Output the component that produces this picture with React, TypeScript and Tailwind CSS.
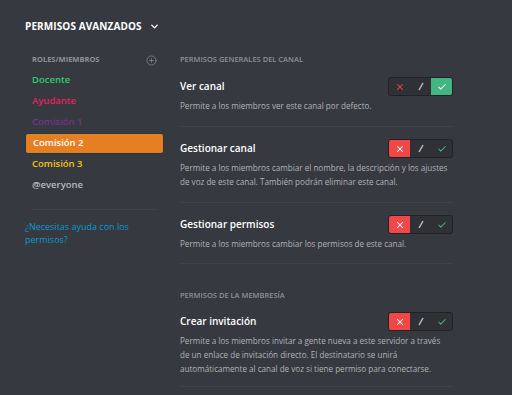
import React from "react";
import { ChevronDown, CirclePlus, X, Check } from "lucide-react";

const font = { fontFamily: '"Open Sans", "Noto Sans", sans-serif' };

type Role = { name: string; color: string; selected?: boolean };

const roles: Role[] = [
	{ name: "Docente", color: "text-[#2ecc71]" },
	{ name: "Ayudante", color: "text-[#e91e63]" },
	{ name: "Comisión 1", color: "text-[#71368a]" },
	{ name: "Comisión 2", color: "text-white", selected: true },
	{ name: "Comisión 3", color: "text-[#f1c40f]" },
	{ name: "@everyone", color: "text-[#b9bbbe]" },
];

const Toggle = ({ state }: { state: "allow" | "deny" }) => (
	<div className="flex w-[65px] h-[19px] rounded-[3px] border border-[#202225] bg-[#2f3136] overflow-hidden">
		<div
			className={`flex-1 flex items-center justify-center ${
				state === "deny" ? "bg-[#f04747]" : ""
			}`}
		>
			<X
				size={10}
				strokeWidth={2.5}
				className={state === "deny" ? "text-white" : "text-[#f04747]"}
			/>
		</div>
		<div className="flex-1 flex items-center justify-center">
			<svg width="8" height="9" viewBox="0 0 8 9">
				<path d="M2 8 L6 1" stroke="#b9bbbe" strokeWidth="1.5" />
			</svg>
		</div>
		<div
			className={`flex-1 flex items-center justify-center ${
				state === "allow" ? "bg-[#43b581]" : ""
			}`}
		>
			<Check
				size={10}
				strokeWidth={2.5}
				className={state === "allow" ? "text-white" : "text-[#43b581]"}
			/>
		</div>
	</div>
);

const Permission = ({
	title,
	desc,
	state,
	pt,
	pb,
}: {
	title: string;
	desc: string;
	state: "allow" | "deny";
	pt: string;
	pb: string;
}) => (
	<div className={`${pt} ${pb} border-b border-[#40434a]`}>
		<div className="flex h-[19px] items-center justify-between">
			<div className="text-[10px] font-semibold text-white">{title}</div>
			<Toggle state={state} />
		</div>
		<div className="mt-[3px] text-[8.1px] leading-[14px] text-[#b0b3b7] pr-[2px]">{desc}</div>
	</div>
);

const App = () => {
	return (
		<div className="w-[512px] h-[395px] bg-[#36393f] overflow-hidden flex flex-col select-none" style={font}>
			<div className="flex items-center h-[21px] mt-[16px] pl-[25px] w-[164px] justify-between pr-[4px]">
				<div className="text-[10px] font-bold text-white tracking-[0.1px]">PERMISOS AVANZADOS</div>
				<ChevronDown size={11} strokeWidth={3} className="text-white" />
			</div>
			<div className="flex flex-row mt-[16px]">
				<div className="w-[180px] pl-[25px]">
					<div className="w-[139px]">
						<div className="flex h-[14px] items-center justify-between px-[7px]">
							<div className="text-[7.5px] font-bold text-[#8e9297]">ROLES/MIEMBROS</div>
							<CirclePlus size={11} strokeWidth={1.5} className="text-[#8e9297]" />
						</div>
						<div className="mt-[3px] flex flex-col">
							{roles.map((r) => (
								<div
									key={r.name}
									className={`flex h-[21px] items-center px-[7px] rounded-[3px] text-[9.5px] font-semibold ${r.color} ${
										r.selected ? "bg-[#e67e22] border border-[#1e3a40] px-[6px]" : ""
									}`}
								>
									{r.name}
								</div>
							))}
						</div>
						<div className="mt-[13px] mx-[7px] h-px bg-[#40434a]" />
						<div className="mt-[10px] text-[9px] leading-[13px] text-[#0b98d0] w-[110px]">
							¿Necesitas ayuda con los permisos?
						</div>
					</div>
				</div>
				<div className="w-[273px]">
					<div className="h-[14px] flex items-center text-[7.5px] font-semibold text-[#8e9297]">
						PERMISOS GENERALES DEL CANAL
					</div>
					<Permission
						title="Ver canal"
						desc="Permite a los miembros ver este canal por defecto."
						state="allow"
						pt="pt-[10px]"
						pb="pb-[13px]"
					/>
					<Permission
						title="Gestionar canal"
						desc="Permite a los miembros cambiar el nombre, la descripción y los ajustes de voz de este canal. También podrán eliminar este canal."
						state="deny"
						pt="pt-[12px]"
						pb="pb-[13px]"
					/>
					<Permission
						title="Gestionar permisos"
						desc="Permite a los miembros cambiar los permisos de este canal."
						state="deny"
						pt="pt-[12px]"
						pb="pb-[12px]"
					/>
					<div className="mt-[25px] h-[14px] flex items-center text-[7.5px] font-semibold text-[#8e9297]">
						PERMISOS DE LA MEMBRESÍA
					</div>
					<Permission
						title="Crear invitación"
						desc="Permite a los miembros invitar a gente nueva a este servidor a través de un enlace de invitación directo. El destinatario se unirá automáticamente al canal de voz si tiene permiso para conectarse."
						state="deny"
						pt="pt-[9px]"
						pb="pb-[10px]"
					/>
				</div>
			</div>
		</div>
	);
};

export default App;
